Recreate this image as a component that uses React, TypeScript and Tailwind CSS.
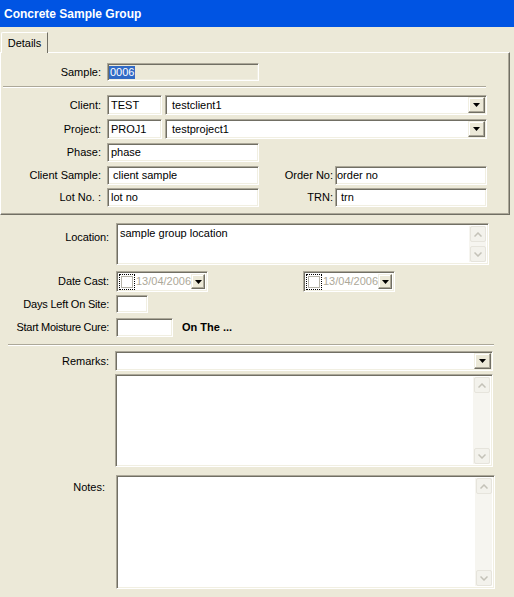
import React from 'react';

const sunken =
    'border border-t-[#aca899] border-l-[#aca899] border-b-white border-r-white shadow-[inset_1px_1px_0_#716f64,inset_-1px_-1px_0_#f1efe2]';

function DropButton() {
    return (
        <div className="w-[17px] h-full flex items-center justify-center bg-[#ece9d8] border border-t-[#f1efe2] border-l-[#f1efe2] border-b-[#716f64] border-r-[#716f64] shadow-[inset_-1px_-1px_0_#aca899,inset_1px_1px_0_#fff]">
            <svg width="7" height="4" viewBox="0 0 7 4">
                <path d="M0 0h7L3.5 4z" fill="#000" />
            </svg>
        </div>
    );
}

function TextBox({ value, className = '' }: { value?: string; className?: string }) {
    return (
        <div className={`${sunken} bg-white flex items-center px-[3px] ${className}`}>
            <span className="leading-none">{value}</span>
        </div>
    );
}

function Combo({ value, className = '' }: { value?: string; className?: string }) {
    return (
        <div className={`${sunken} bg-white flex items-stretch p-[1px] ${className}`}>
            <span className="flex-1 flex items-center px-[5px]">{value}</span>
            <DropButton />
        </div>
    );
}

function ScrollArrow({ up }: { up?: boolean }) {
    return (
        <div className="w-[16px] h-[16px] rounded-[2px] border border-[#e6e4dc] bg-[#f3f2ec] flex items-center justify-center">
            <svg width="8" height="5" viewBox="0 0 8 5">
                <path
                    d={up ? 'M0.5 4.5L4 1l3.5 3.5' : 'M0.5 0.5L4 4l3.5-3.5'}
                    fill="none"
                    stroke="#c4c2b8"
                    strokeWidth="1.5"
                />
            </svg>
        </div>
    );
}

function Memo({ value, className = '' }: { value?: string; className?: string }) {
    return (
        <div className={`${sunken} bg-white flex items-stretch p-[2px] ${className}`}>
            <div className="flex-1 px-[1px] pt-[1px] leading-[13px]">{value}</div>
            <div className="w-[17px] bg-[#f6f5f0] flex flex-col justify-between items-center">
                <ScrollArrow up />
                <ScrollArrow />
            </div>
        </div>
    );
}

function DatePicker() {
    return (
        <div className={`${sunken} bg-white w-[92px] h-[21px] flex items-stretch p-[2px]`}>
            <div className="flex items-center pl-[1px]">
                <div className="w-[14px] h-[14px] outline outline-1 outline-dotted outline-black flex items-center justify-center">
                    <div className="w-[12px] h-[12px] border border-[#b5b3a8] bg-white" />
                </div>
            </div>
            <span className="flex-1 flex items-center pl-[2px] text-[#aca899]">13/04/2006</span>
            <DropButton />
        </div>
    );
}

function Separator({ className = '' }: { className?: string }) {
    return (
        <div className={`h-[2px] border-t border-t-[#aca899] border-b border-b-white ${className}`} />
    );
}

export default function App() {
    return (
        <div className="w-[514px] h-[597px] bg-[#ece9d8] text-[11px] text-black font-['Liberation_Sans',Arial,sans-serif] overflow-hidden">
            {/* Title bar */}
            <div className="h-[27px] bg-[#0054e3] flex items-center pl-[4px]">
                <span className="text-white font-bold text-[12px]">Concrete Sample Group</span>
            </div>

            {/* Tab strip */}
            <div className="mt-[5px] pl-[1px] flex">
                <div className="relative z-10 -mb-px w-[47px] h-[21px] bg-[#ece9d8] border-t border-l border-white border-r border-r-[#716f64] rounded-tl-[2px] flex items-center justify-center">
                    Details
                </div>
            </div>

            {/* Details panel */}
            <div className="w-[510px] border border-white border-r-[#716f64] border-b-[#716f64] shadow-[inset_-1px_-1px_0_#aca899] pb-[7px]">
                <div className="mt-[10px] flex items-center h-[18px]">
                    <span className="w-[100px] text-right">Sample:</span>
                    <div className={`${sunken} ml-[6px] w-[152px] h-[18px] bg-[#ece9d8] flex items-center px-[1px]`}>
                        <span className="bg-[#316ac5] text-white leading-[13px] px-[1px]">0006</span>
                    </div>
                </div>

                <Separator className="mt-[5px] ml-[2px] w-[483px]" />

                <div className="mt-[7px] flex items-center h-[20px]">
                    <span className="w-[100px] text-right">Client:</span>
                    <TextBox value="TEST" className="ml-[6px] w-[55px] h-[20px]" />
                    <Combo value="testclient1" className="ml-[3px] w-[322px] h-[20px]" />
                </div>
                <div className="mt-[4px] flex items-center h-[20px]">
                    <span className="w-[100px] text-right">Project:</span>
                    <TextBox value="PROJ1" className="ml-[6px] w-[55px] h-[20px]" />
                    <Combo value="testproject1" className="ml-[3px] w-[322px] h-[20px]" />
                </div>
                <div className="mt-[4px] flex items-center h-[19px]">
                    <span className="w-[100px] text-right">Phase:</span>
                    <TextBox value="phase" className="ml-[6px] w-[152px] h-[19px]" />
                </div>
                <div className="mt-[4px] flex items-center h-[19px]">
                    <span className="w-[100px] text-right">Client Sample:</span>
                    <TextBox value="client sample" className="ml-[6px] w-[152px] h-[19px] pl-[5px]" />
                    <span className="w-[74px] text-right">Order No:</span>
                    <TextBox value="order no" className="ml-[2px] w-[152px] h-[19px] pl-[1px]" />
                </div>
                <div className="mt-[3px] flex items-center h-[19px]">
                    <span className="w-[100px] text-right">Lot No. :</span>
                    <TextBox value="lot no" className="ml-[6px] w-[152px] h-[19px]" />
                    <span className="w-[74px] text-right">TRN:</span>
                    <TextBox value="trn" className="ml-[2px] w-[152px] h-[19px] pl-[5px]" />
                </div>
            </div>

            {/* Lower fields */}
            <div className="mt-[8px] flex items-start">
                <span className="w-[109px] text-right pt-[8px] leading-[13px] tracking-[-0.1px]">Location:</span>
                <Memo value="sample group location" className="ml-[7px] w-[373px] h-[42px]" />
            </div>
            <div className="mt-[6px] flex items-center h-[21px]">
                <span className="w-[109px] text-right tracking-[-0.1px]">Date Cast:</span>
                <div className="ml-[7px]">
                    <DatePicker />
                </div>
                <div className="ml-[95px]">
                    <DatePicker />
                </div>
            </div>
            <div className="mt-[3px] flex items-center h-[18px]">
                <span className="w-[109px] text-right tracking-[-0.2px]">Days Left On Site:</span>
                <TextBox className="ml-[7px] w-[32px] h-[18px]" />
            </div>
            <div className="mt-[5px] flex items-center h-[19px]">
                <span className="w-[109px] text-right tracking-[-0.3px]">Start Moisture Cure:</span>
                <TextBox className="ml-[7px] w-[57px] h-[19px]" />
                <span className="ml-[9px] font-bold">On The ...</span>
            </div>

            <Separator className="mt-[7px] ml-[8px] w-[486px]" />

            <div className="mt-[5px] flex items-center h-[20px]">
                <span className="w-[109px] text-right">Remarks:</span>
                <Combo className="ml-[6px] w-[378px] h-[20px]" />
            </div>
            <div className="mt-[3px] flex">
                <Memo className="ml-[115px] w-[378px] h-[93px]" />
            </div>
            <div className="mt-[8px] flex items-start">
                <span className="w-[105px] text-right pt-[6px] leading-[13px]">Notes:</span>
                <Memo className="ml-[11px] w-[379px] h-[114px]" />
            </div>
        </div>
    );
}
